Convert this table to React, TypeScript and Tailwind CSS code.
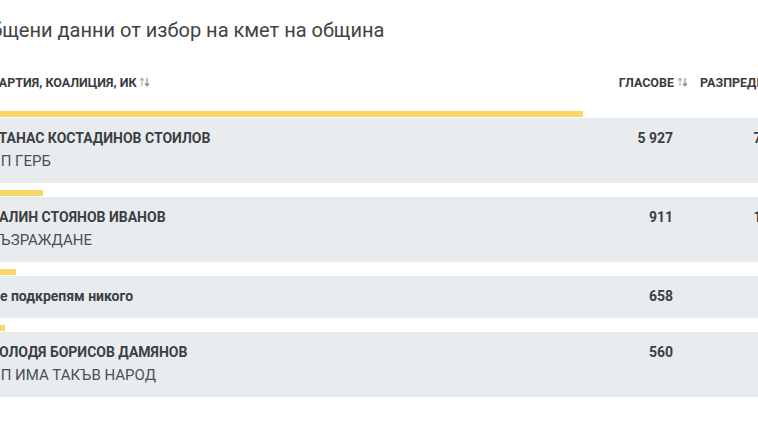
import React from "react";

const rows = [
  { name: "АТАНАС КОСТАДИНОВ СТОИЛОВ", party: "ПП ГЕРБ", votes: 5927, pct: "73,57 %" },
  { name: "КАЛИН СТОЯНОВ ИВАНОВ", party: "ВЪЗРАЖДАНЕ", votes: 911, pct: "11,31 %" },
  { name: "Не подкрепям никого", party: "", votes: 658, pct: "8,17 %" },
  { name: "ВОЛОДЯ БОРИСОВ ДАМЯНОВ", party: "ПП ИМА ТАКЪВ НАРОД", votes: 560, pct: "6,95 %" },
];

function SortIcon() {
  return (
    <svg width="11" height="10" viewBox="0 0 11 10" className="inline-block ml-[3px] -mt-[3px]">
      <path d="M3 9V1.5M1 3.5L3 1.2L5 3.5" stroke="#b5b5b5" strokeWidth="1.2" fill="none" />
      <path d="M8 1v7.5M6 6.5L8 8.8L10 6.5" stroke="#8c8c8c" strokeWidth="1.2" fill="none" />
    </svg>
  );
}

function fmt(n: number) {
  return n.toString().replace(/\B(?=(\d{3})+(?!\d))/g, " ");
}

export default function App() {
  const max = 5927;
  return (
    <div
      className="w-[758px] h-[426px] overflow-hidden bg-white"
      style={{ fontFamily: "Roboto, 'Noto Sans', sans-serif" }}
    >
      <div className="ml-[-55px] w-[920px] pt-[18px]">
        <h1 className="pl-[10px] text-[20px] leading-[24px] font-normal text-[#3f4346]">
          Обобщени данни от избор на кмет на община
        </h1>
        <div className="mt-[33px] flex text-[12.5px] leading-[16px] font-bold text-[#3a3d40]">
          <div className="w-[630px] pl-[45px]">
            ПАРТИЯ, КОАЛИЦИЯ, ИК
            <SortIcon />
          </div>
          <div className="w-[125px] text-right pr-[12px]">
            ГЛАСОВЕ
            <SortIcon />
          </div>
          <div className="w-[165px]">РАЗПРЕДЕЛЕНИЕ</div>
        </div>
        <div className="mt-[20px] flex flex-col gap-[7px]">
          {rows.map((r) => (
            <div key={r.name}>
              <div
                className="h-[6px] bg-[#f8d668] mb-[1px]"
                style={{ width: `${(r.votes / max) * 638}px` }}
              />
              <div className="flex bg-[#e9ecef] pt-[10px] pb-[12px] text-[#3b4044]">
                <div className="w-[630px] pl-[45px]">
                  <div className="text-[14px] leading-[20px] font-bold">{r.name}</div>
                  {r.party && (
                    <div className="mt-[3px] text-[15px] leading-[20px] font-normal text-[#4b5055]">
                      {r.party}
                    </div>
                  )}
                </div>
                <div className="w-[125px] text-right pr-[27px] text-[14px] leading-[20px] font-bold">
                  {fmt(r.votes)}
                </div>
                <div className="w-[165px] text-right pr-[62px] text-[14px] leading-[20px] font-bold">
                  {r.pct}
                </div>
              </div>
            </div>
          ))}
        </div>
      </div>
    </div>
  );
}
